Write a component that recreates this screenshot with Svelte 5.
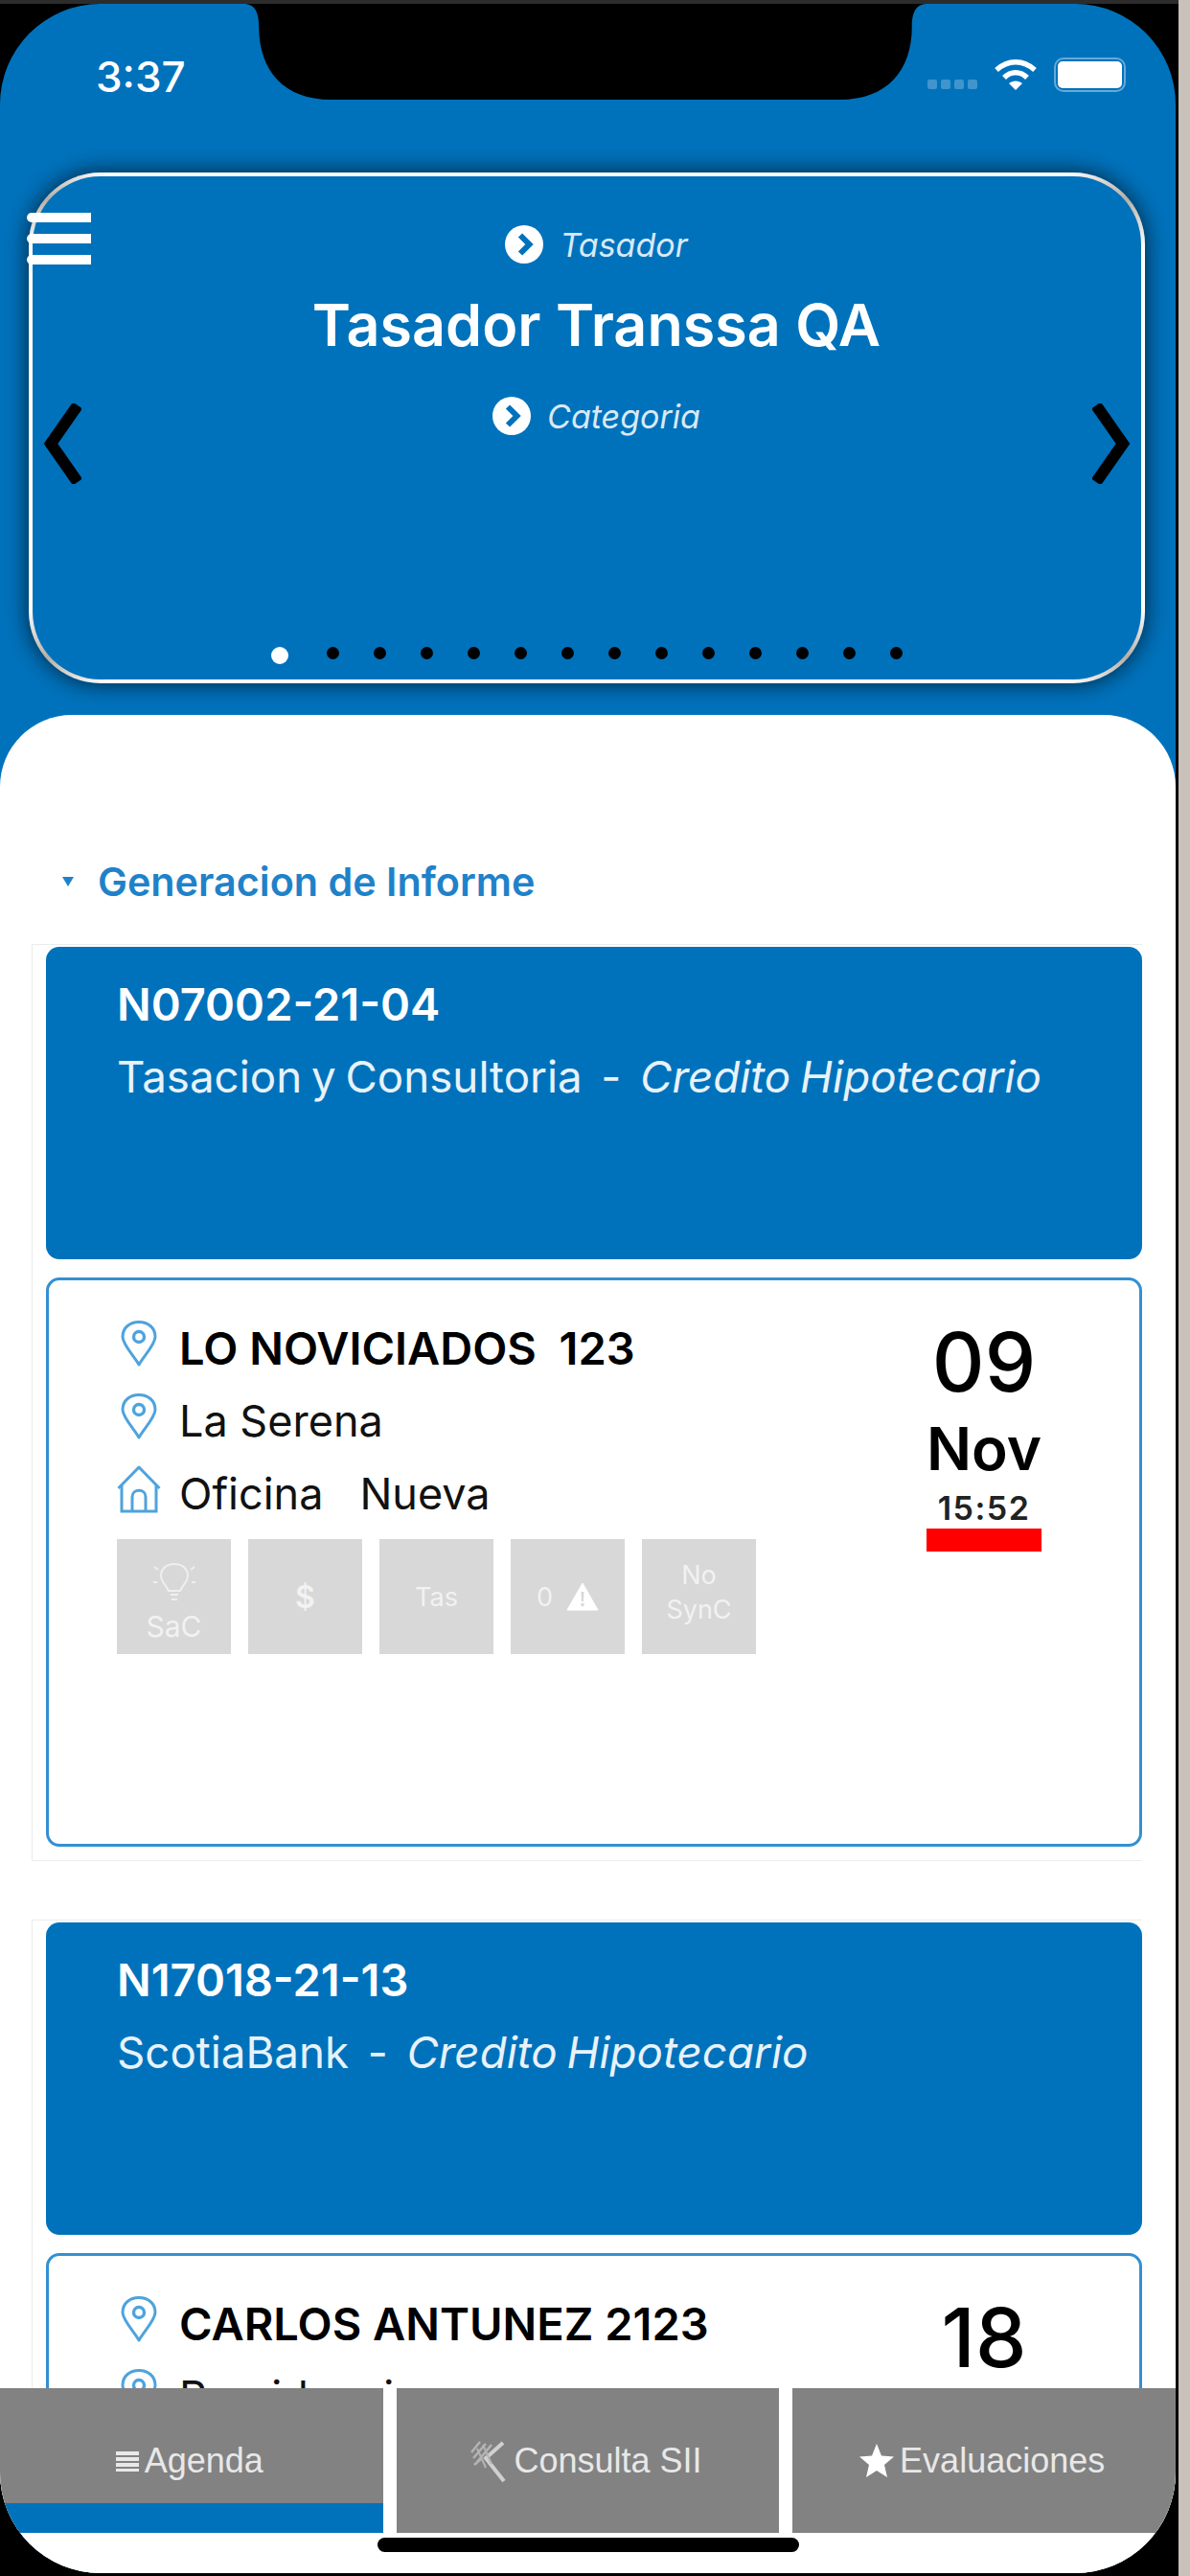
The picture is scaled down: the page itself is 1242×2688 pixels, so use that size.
<script lang="ts">
	const dots = Array.from({ length: 14 }, (_, i) => i);

	// the second order runs under the tab bar, only its first rows are on screen
	const orders = [
		{
			code: 'N07002-21-04',
			client: 'Tasacion y Consultoria',
			product: 'Credito Hipotecario',
			address: 'LO NOVICIADOS  123',
			city: 'La Serena',
			kind: 'Oficina   Nueva',
			day: '09',
			month: 'Nov',
			time: '15:52'
		},
		{
			code: 'N17018-21-13',
			client: 'ScotiaBank',
			product: 'Credito Hipotecario',
			address: 'CARLOS ANTUNEZ 2123',
			city: 'Providencia',
			day: '18'
		}
	];
</script>

{#snippet pin()}
	<svg class="row-icon" viewBox="0 0 46 48" width="46" height="48" fill="none" stroke="#4ea3dd" stroke-width="3">
		<path d="M23 46 C18 37 6 25 6 17 C6 7 14 1.500 23 1.500 C32 1.500 40 7 40 17 C40 25 28 37 23 46 Z" stroke-linejoin="round" />
		<circle cx="23" cy="17" r="5.500" stroke-width="3.400" />
	</svg>
{/snippet}

{#snippet house()}
	<svg class="row-icon" viewBox="0 0 46 50" width="46" height="50" fill="none" stroke="#4ea3dd" stroke-width="3">
		<path d="M1.500 24 L23 2 L44.500 24" stroke-linejoin="round" />
		<path d="M5 20 V48 H41 V20" />
		<path d="M16 48 V33 C16 24 30 24 30 33 V48" />
	</svg>
{/snippet}

{#snippet goIcon()}
	<svg viewBox="0 0 40 40" width="40" height="40">
		<circle cx="20" cy="20" r="20" fill="#fff" />
		<path d="M16 10.500 L25.500 20 L16 29.500" fill="none" stroke="#0072bc" stroke-width="6" />
	</svg>
{/snippet}

<div class="desktop">
	<div class="phone">
		<div class="screen">
			<svg class="notch" viewBox="0 0 704 102" width="714" height="102" preserveAspectRatio="none">
				<path d="M0 0 C10 0 16 6 16 24 C16 70 42 100 90 100 H614 C662 100 688 70 688 24 C688 6 694 0 704 0 Z" fill="#000" />
			</svg>

			<header class="status">
				<span class="clock">3:37</span>
				<div class="status-icons">
					<span class="signal"><i></i><i></i><i></i><i></i></span>
					<svg viewBox="0 0 46 34" width="46" height="34" fill="none" stroke="#fff" stroke-width="5.500">
						<path d="M3 12 C15 1 31 1 43 12" />
						<path d="M11 20 C18 13 28 13 35 20" />
						<path d="M23 33 L16 26 C20 22.500 26 22.500 30 26 Z" fill="#fff" stroke="none" />
					</svg>
					<span class="battery"><b></b></span>
				</div>
			</header>

			<section class="hero">
				<div class="menu"><span></span><span></span><span></span></div>
				<svg class="chevron left" viewBox="0 0 40 84" width="40" height="84" fill="none" stroke="#000" stroke-width="12">
					<path d="M36 2 L8 42 L36 82" />
				</svg>
				<svg class="chevron right" viewBox="0 0 40 84" width="40" height="84" fill="none" stroke="#000" stroke-width="12">
					<path d="M4 2 L32 42 L4 82" />
				</svg>

				<div class="hero-label">{@render goIcon()}<em>Tasador</em></div>
				<h1>Tasador Transsa QA</h1>
				<div class="hero-label">{@render goIcon()}<em>Categoria</em></div>

				<div class="dots">
					{#each dots as d}
						<span class="dot" class:active={d === 0}></span>
					{/each}
				</div>
			</section>

			<main class="panel">
				<div class="scroll">
					<h2><span class="caret"></span>Generacion de Informe</h2>

					{#each orders as o}
						<article class="order">
							<div class="order-head">
								<div class="code">{o.code}</div>
								<div class="client">{o.client}&nbsp; - &nbsp;<em>{o.product}</em></div>
							</div>
							<div class="detail">
								<div class="info">
									<div class="row strong">{@render pin()}<span>{o.address}</span></div>
									<div class="row">{@render pin()}<span>{o.city}</span></div>
									{#if o.kind}
										<div class="row">{@render house()}<span>{o.kind}</span></div>
										<div class="badges">
											<div class="badge stack">
												<svg viewBox="0 0 48 46" width="48" height="46" fill="none" stroke="#efefef" stroke-width="2">
													<path d="M18 33 C15 26 10 24 10 17 C10 10 16 5 24 5 C32 5 38 10 38 17 C38 24 33 26 30 33 Z" />
													<path d="M20 37 H28 M21 42 H27" />
													<path d="M3 8 L7 11 M45 8 L41 11 M2 24 H6 M46 24 H42" />
												</svg>
												<span>SaC</span>
											</div>
											<div class="badge bold">$</div>
											<div class="badge">Tas</div>
											<div class="badge">
												0
												<svg viewBox="0 0 34 30" width="34" height="30">
													<path d="M17 1 L33 29 H1 Z" fill="#fff" stroke="#fff" stroke-linejoin="round" />
													<path d="M15.500 10 H18.500 L18 20 H16 Z M15.500 22 H18.500 V25 H15.500 Z" fill="#d8d8d8" />
												</svg>
											</div>
											<div class="badge lines">No<br />SynC</div>
										</div>
									{/if}
								</div>
								<div class="date">
									<div class="day">{o.day}</div>
									{#if o.month}
										<div class="month">{o.month}</div>
										<div class="time">{o.time}</div>
										<div class="late"></div>
									{/if}
								</div>
							</div>
						</article>
					{/each}
				</div>

				<nav class="tabs">
					<div class="tab current">
						<svg viewBox="0 0 24 22" width="24" height="22" fill="#e8e8e8">
							<rect y="1" width="24" height="4" /><rect y="7" width="24" height="4" />
							<rect y="13" width="24" height="4" /><rect y="19" width="24" height="3" />
						</svg>
						<span>Agenda</span>
					</div>
					<div class="tab">
						<svg viewBox="0 0 40 46" width="40" height="46" fill="none" stroke="#b4b4b4" stroke-width="3">
							<path d="M17 5 L4 20 M23 6 L8 24 M11 3 L2 14 M5 27 L12 21" stroke-width="2.500" />
							<path d="M35 4 L17 20 L36 44" stroke="#d0d0d0" stroke-width="4" />
							<path d="M8 10 L17 30 M14 6 L23 26" stroke-width="2" />
						</svg>
						<span>Consulta SII</span>
					</div>
					<div class="tab">
						<svg viewBox="0 0 36 36" width="36" height="36" fill="#fff">
							<path d="M18 0 L23 12.500 L36 13.500 L26 22 L29 35 L18 28 L7 35 L10 22 L0 13.500 L13 12.500 Z" />
						</svg>
						<span>Evaluaciones</span>
					</div>
				</nav>

				<div class="home-area"><span class="home-bar"></span></div>
			</main>
		</div>
	</div>
</div>

<style>
	:global(body) {
		margin: 0;
		background: #c9c2bb;
	}

	.desktop {
		width: 1242px;
		height: 2688px;
		overflow: hidden;
		background: #c9c2bb;
		font-family: Inter, 'Liberation Sans', sans-serif;
	}

	.phone {
		width: 1230px;
		height: 2688px;
		padding-top: 4px;
		box-sizing: border-box;
		background: #000;
		box-shadow: inset 0 4px 0 #2c2c2c;
	}

	.screen {
		position: relative;
		width: 1227px;
		height: 2681px;
		display: flex;
		flex-direction: column;
		overflow: hidden;
		background: #0072bc;
		border-radius: 105px;
	}

	.notch {
		position: absolute;
		top: 0;
		left: 254px;
	}

	.status {
		height: 176px;
		flex: none;
		display: flex;
		justify-content: space-between;
		align-items: flex-start;
		padding: 50px 52px 0 100px;
		box-sizing: border-box;
		color: #fff;
	}

	.clock {
		font-size: 44px;
		line-height: 52px;
		font-weight: 500;
	}

	.status-icons {
		display: flex;
		align-items: center;
		gap: 17px;
		margin-top: 6px;
	}

	.signal {
		display: flex;
		gap: 4px;
		margin-top: 20px;
	}

	.signal i {
		width: 10px;
		height: 10px;
		border-radius: 2px;
		background: rgba(255, 255, 255, 0.25);
	}

	.battery {
		width: 75px;
		height: 36px;
		box-sizing: border-box;
		padding: 2px;
		border: 2px solid rgba(255, 255, 255, 0.4);
		border-radius: 10px;
	}

	.battery b {
		display: block;
		height: 100%;
		background: #fff;
		border-radius: 5px;
	}

	.hero {
		position: relative;
		flex: none;
		width: 1165px;
		height: 533px;
		margin-left: 30px;
		box-sizing: border-box;
		display: flex;
		flex-direction: column;
		align-items: center;
		padding: 49px 0 16px 20px;
		border: 4px solid transparent;
		border-radius: 75px;
		background:
			linear-gradient(#0072bc, #0072bc) padding-box,
			conic-gradient(
					#fff 0 62deg,
					#b8afa5 67deg,
					#fff 72deg 108deg,
					#b8afa5 113deg,
					#fff 118deg 242deg,
					#b8afa5 247deg,
					#fff 252deg 288deg,
					#b8afa5 293deg,
					#fff 298deg
				)
				border-box;
		box-shadow: 0 0 24px rgba(0, 0, 0, 0.7);
	}

	.menu {
		position: absolute;
		top: 38px;
		left: -6px;
		width: 67px;
		display: flex;
		flex-direction: column;
		gap: 12px;
	}

	.menu span {
		height: 10px;
		background: #fff;
		border-radius: 5px 0 0 5px;
	}

	.chevron {
		position: absolute;
		top: 237px;
	}

	.chevron.left {
		left: 11px;
	}

	.chevron.right {
		right: 11px;
	}

	.hero-label {
		height: 44px;
		display: flex;
		align-items: center;
		gap: 17px;
		color: #d9e9f5;
		font-size: 34px;
	}

	h1 {
		margin: 24px 0 35px;
		font-size: 61px;
		line-height: 76px;
		font-weight: 600;
		color: #fff;
	}

	.dots {
		margin-top: auto;
		display: flex;
		align-items: flex-start;
		gap: 36px;
		margin-left: -20px;
	}

	.dot {
		width: 13px;
		height: 13px;
		border-radius: 50%;
		background: #000;
	}

	.dot.active {
		width: 18px;
		height: 18px;
		margin-right: 4px;
		background: #fff;
	}

	.panel {
		flex: 1;
		min-height: 0;
		margin-top: 33px;
		display: flex;
		flex-direction: column;
		background: #fff;
		border-radius: 75px 75px 0 0;
	}

	.scroll {
		flex: 1;
		min-height: 0;
		overflow: hidden;
		padding-top: 152px;
	}

	h2 {
		display: flex;
		align-items: center;
		margin: 0 0 43px 65px;
		height: 44px;
		font-size: 41.300px;
		font-weight: 600;
		color: #1f82c9;
	}

	.caret {
		width: 0;
		height: 0;
		margin-right: 25px;
		border-left: 6px solid transparent;
		border-right: 6px solid transparent;
		border-top: 10px solid #1f82c9;
	}

	.order {
		width: 1159px;
		margin: 0 0 61px 33px;
		box-sizing: border-box;
		padding: 2px 0 14px 14px;
		border: 1px solid #ececec;
		border-right: 0;
	}

	.order-head {
		height: 326px;
		box-sizing: border-box;
		padding: 32px 0 0 74px;
		background: #0072bc;
		border-radius: 14px;
		color: #fff;
	}

	.code {
		font-size: 47px;
		line-height: 56px;
		font-weight: 600;
	}

	.client {
		margin-top: 20px;
		font-size: 45.700px;
		line-height: 56px;
		word-spacing: -3px;
		color: #e8f2f9;
	}

	.detail {
		height: 594px;
		margin-top: 19px;
		box-sizing: border-box;
		display: flex;
		justify-content: space-between;
		padding: 41px 62px 0 71px;
		border: 3px solid #3290d2;
		border-radius: 14px;
		background: #fff;
	}

	.row {
		height: 56px;
		margin-bottom: 20px;
		display: flex;
		align-items: center;
		gap: 19px;
		font-size: 45px;
		color: #111;
		white-space: pre;
	}

	.row span {
		position: relative;
		top: 1px;
	}

	.row.strong {
		font-weight: 600;
		font-size: 47px;
		color: #000;
	}

	.row-icon {
		flex: none;
		margin-bottom: 6px;
	}

	.badges {
		display: flex;
		gap: 18px;
		margin-top: 21px;
	}

	.badge {
		width: 119px;
		height: 120px;
		display: flex;
		align-items: center;
		justify-content: center;
		gap: 14px;
		background: #d8d8d8;
		color: #f2f2f2;
		font-size: 27px;
	}

	.badge.bold {
		font-weight: 600;
		font-size: 32px;
	}

	.badge.stack {
		flex-direction: column;
		gap: 8px;
		padding-top: 8px;
		box-sizing: border-box;
		font-size: 30px;
		line-height: 32px;
	}

	.badge.lines {
		display: block;
		padding-top: 20px;
		box-sizing: border-box;
		text-align: center;
		line-height: 36px;
	}

	.date {
		width: 200px;
		display: flex;
		flex-direction: column;
		align-items: center;
		color: #000;
	}

	.day {
		font-size: 85px;
		line-height: 90px;
		font-weight: 500;
	}

	.month {
		margin-top: 10px;
		font-size: 62px;
		line-height: 70px;
		font-weight: 600;
	}

	.time {
		margin-top: 9px;
		font-size: 34px;
		line-height: 36px;
		letter-spacing: 1.500px;
		font-weight: 600;
		color: #222;
	}

	.late {
		width: 120px;
		height: 24px;
		margin-top: 3px;
		background: #f00;
	}

	.tabs {
		flex: none;
		height: 151px;
		display: flex;
		gap: 14px;
		background: #fff;
		font-family: 'Liberation Sans', Arial, sans-serif;
	}

	.tab {
		position: relative;
		flex: 1;
		display: flex;
		align-items: center;
		justify-content: center;
		gap: 6px;
		padding-right: 4px;
		background: #828282;
		color: #e8e8e8;
		font-size: 36px;
	}

	.tab.current::after {
		content: '';
		position: absolute;
		left: 0;
		right: 0;
		bottom: 0;
		height: 31px;
		background: #0072bc;
	}

	.home-area {
		flex: none;
		height: 42px;
		display: flex;
		justify-content: center;
		padding-top: 5px;
		box-sizing: border-box;
		background: #fff;
	}

	.home-bar {
		width: 440px;
		height: 15px;
		border-radius: 8px;
		background: #000;
	}
</style>
